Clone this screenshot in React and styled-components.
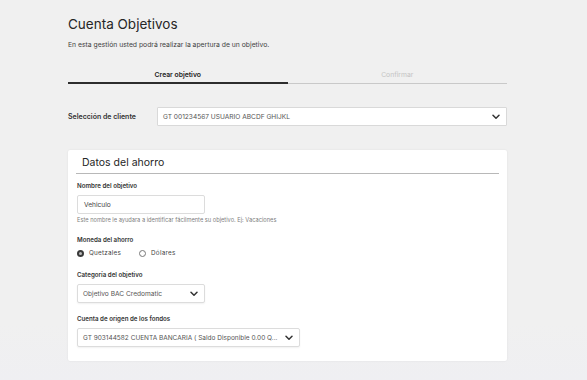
import React from "react";
import styled, { createGlobalStyle } from "styled-components";

const Global = createGlobalStyle`
  html, body { margin: 0; padding: 0; background: #f0f0f0; }
  body { font-family: Inter, "Noto Sans", "Liberation Sans", sans-serif; color: #2b2b2b; }
  * { box-sizing: border-box; }
`;

const Page = styled.div`
  width: 587px;
  height: 380px;
  padding: 16px 0 0 68px;
  background: linear-gradient(#f0f0f0, #f0f0f0 85%, #efeff2);
  overflow: hidden;
`;

const Content = styled.div`
  width: 439px;
  display: flex;
  flex-direction: column;
`;

const Title = styled.h1`
  margin: 0;
  font-size: 13.5px;
  font-weight: 400;
  line-height: 16px;
  color: #262626;
`;

const Subtitle = styled.p`
  margin: 8px 0 0;
  font-size: 6.8px;
  line-height: 9px;
  color: #3f3f3f;
`;

const Tabs = styled.div`
  margin-top: 20px;
  display: flex;
`;

const Tab = styled.div`
  flex: 1;
  text-align: center;
  font-size: 6.8px;
  font-weight: ${p => (p.$active ? 600 : 400)};
  color: ${p => (p.$active ? "#222" : "#c4c4c4")};
  line-height: 9px;
  padding-bottom: 4px;
  border-bottom: ${p => (p.$active ? "2px solid #2d2d2d" : "1px solid #c9c9c9")};
  align-self: flex-start;
  height: ${p => (p.$active ? "15px" : "14.5px")};
  padding-top: 1px;
`;

const ClientRow = styled.div`
  margin-top: 23px;
  display: flex;
  align-items: center;
`;

const RowLabel = styled.div`
  width: 89px;
  font-size: 7px;
  font-weight: 600;
  color: #333;
`;

const Select = styled.div`
  width: ${p => p.$w};
  height: ${p => p.$h || "19px"};
  background: #fff;
  border: 1px solid ${p => p.$border || "#dedede"};
  border-radius: ${p => p.$r || "1px"};
  display: flex;
  align-items: center;
  justify-content: space-between;
  padding: 0 6px 0 5px;
  font-size: ${p => p.$fs || "6.6px"};
  color: #555;
  white-space: nowrap;
  box-shadow: ${p => (p.$shadow ? "0 1px 2px rgba(0,0,0,0.06)" : "none")};
`;

const Card = styled.div`
  margin-top: 24px;
  background: #fff;
  border-radius: 2px;
  box-shadow: 0 0 2px rgba(0,0,0,0.08);
  height: 211px;
  padding: 0 8px 0 9px;
  display: flex;
  flex-direction: column;
`;

const CardTitle = styled.h2`
  margin: 0;
  font-size: 10.5px;
  font-weight: 400;
  color: #262626;
  line-height: 13px;
  padding: 6px 0 4px 6px;
  border-bottom: 1px solid #b8b8b8;
  margin-left: -1px;
`;

const Field = styled.div`
  display: flex;
  flex-direction: column;
  margin-top: ${p => p.$mt || "8px"};
`;

const Label = styled.div`
  font-size: 6.2px;
  font-weight: 600;
  color: #333;
  line-height: 8px;
`;

const Input = styled.div`
  margin-top: 5px;
  width: 128px;
  height: 19px;
  border: 1px solid #dcdcdc;
  border-radius: 2px;
  display: flex;
  align-items: center;
  padding-left: 6px;
  font-size: 6.6px;
  color: #444;
`;

const Help = styled.div`
  margin-top: 2px;
  font-size: 5.7px;
  color: #808080;
  line-height: 7px;
`;

const Radios = styled.div`
  margin-top: 5px;
  display: flex;
  align-items: center;
  gap: 18px;
`;

const RadioItem = styled.div`
  display: flex;
  align-items: center;
  gap: 5px;
  font-size: 6.3px;
  color: #444;
  letter-spacing: 0.25px;
`;

const Radio = styled.span`
  width: 7px;
  height: 7px;
  border-radius: 50%;
  border: ${p => (p.$on ? "2px solid #3a3a3a" : "1px solid #777")};
  background: ${p => (p.$on ? "#bbb" : "#fff")};
  display: inline-block;
`;

const SelectWrap = styled.div`
  margin-top: 5px;
`;

const Chevron = () => (
  <svg width="8" height="6" viewBox="0 0 8 6" style={{ flex: "none" }}>
    <path d="M1 1.2 L4 4.2 L7 1.2" fill="none" stroke="#333" strokeWidth="1.5" strokeLinecap="round" strokeLinejoin="round" />
  </svg>
);

export default function App() {
  return (
    <>
      <Global />
      <Page>
        <Content>
          <Title>Cuenta Objetivos</Title>
          <Subtitle>En esta gestión usted podrá realizar la apertura de un objetivo.</Subtitle>
          <Tabs>
            <Tab $active>Crear objetivo</Tab>
            <Tab>Confirmar</Tab>
          </Tabs>
          <ClientRow>
            <RowLabel>Selección de cliente</RowLabel>
            <Select $w="350px" $border="#d9d9d9">
              <span>GT 001234567 USUARIO ABCDF GHIJKL</span>
              <Chevron />
            </Select>
          </ClientRow>
          <Card>
            <CardTitle>Datos del ahorro</CardTitle>
            <Field $mt="8px">
              <Label>Nombre del objetivo</Label>
              <Input>Vehiculo</Input>
              <Help>Este nombre le ayudara a identificar fácilmente su objetivo. Ej: Vacaciones</Help>
            </Field>
            <Field $mt="13px">
              <Label>Moneda del ahorro</Label>
              <Radios>
                <RadioItem><Radio $on />Quetzales</RadioItem>
                <RadioItem><Radio />Dólares</RadioItem>
              </Radios>
            </Field>
            <Field $mt="14px">
              <Label>Categoría del objetivo</Label>
              <SelectWrap>
                <Select $w="128px" $r="2px" $shadow $fs="6.6px" $border="#dcdcdc">
                  <span>Objetivo BAC Credomatic</span>
                  <Chevron />
                </Select>
              </SelectWrap>
            </Field>
            <Field $mt="12px">
              <Label>Cuenta de origen de los fondos</Label>
              <SelectWrap>
                <Select $w="223px" $r="2px" $shadow $fs="6.5px" $border="#dcdcdc">
                  <span>GT 903144582 CUENTA BANCARIA ( Saldo Disponible 0.00 Q...</span>
                  <Chevron />
                </Select>
              </SelectWrap>
            </Field>
          </Card>
        </Content>
      </Page>
    </>
  );
}
